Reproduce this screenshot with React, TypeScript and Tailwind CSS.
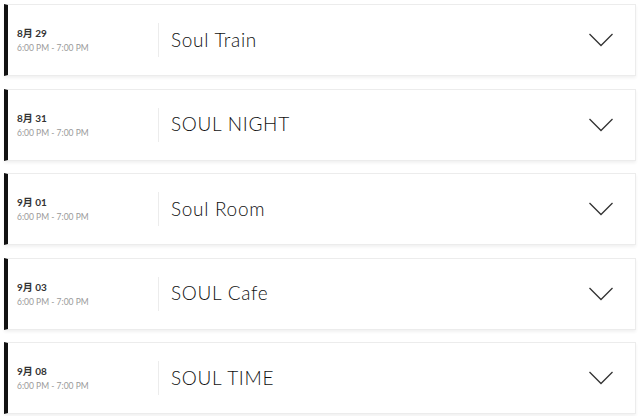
import React from "react";

const items = [
  { date: "8月 29", title: "Soul Train" },
  { date: "8月 31", title: "SOUL NIGHT" },
  { date: "9月 01", title: "Soul Room" },
  { date: "9月 03", title: "SOUL Cafe" },
  { date: "9月 08", title: "SOUL TIME" },
];

function Chevron() {
  return (
    <svg width="26" height="16" viewBox="0 0 26 16" fill="none">
      <path d="M1.5 2 L13 13.5 L24.5 2" stroke="#333" strokeWidth="1.3" />
    </svg>
  );
}

export default function App() {
  return (
    <div
      className="w-[640px] h-[416px] bg-white overflow-hidden pt-[4px] px-[4px] flex flex-col gap-[12.5px]"
      style={{ fontFamily: "Lato, 'Noto Sans CJK JP', sans-serif" }}
    >
      {items.map((it) => (
        <div
          key={it.title}
          className="h-[72px] shrink-0 bg-white border border-[#ececec] border-l-4 border-l-[#111] shadow-[0_2px_3px_rgba(0,0,0,0.06)] flex items-center pr-[21px]"
        >
          <div className="w-[150px] pl-[9px] flex flex-col">
            <div className="text-[10px] font-bold text-[#333] leading-[14px]">{it.date}</div>
            <div className="text-[8.5px] text-[#9a9a9a] leading-[12px] mt-[2px]">6:00 PM - 7:00 PM</div>
          </div>
          <div className="w-px h-[34px] bg-[#ececec]" />
          <div className="flex-1 pl-[12px] text-[19px] font-light text-[#111] tracking-[0.7px]">{it.title}</div>
          <Chevron />
        </div>
      ))}
    </div>
  );
}
